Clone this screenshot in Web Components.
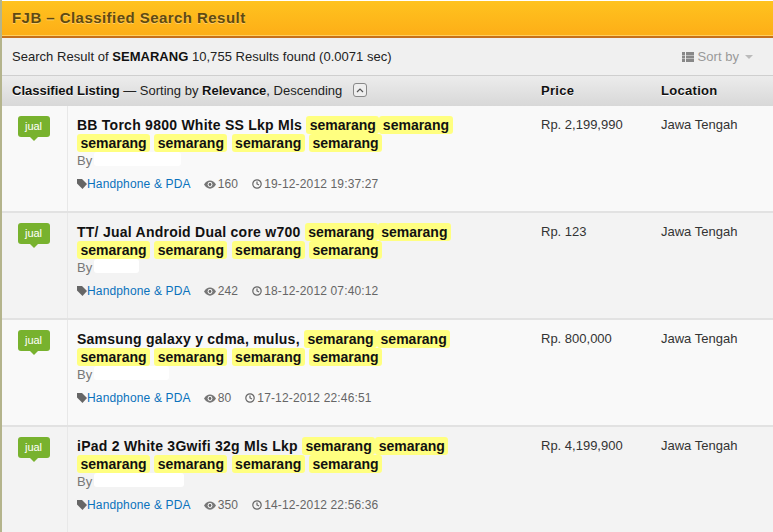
<!DOCTYPE html>
<html><head><meta charset="utf-8"><style>
html,body{margin:0;padding:0;background:#fff;overflow:hidden}
body{width:773px;height:532px;font:13px/18px "Liberation Sans",Arial,sans-serif;color:#333}
</style></head><body>
<fjb-panel>
<fjb-row title-text="BB Torch 9800 White SS Lkp Mls" price="Rp. 2,199,990" views="160" date="19-12-2012 19:37:27" mask="87" bg="#f9f9f9"></fjb-row>
<fjb-row title-text="TT/ Jual Android Dual core w700" price="Rp. 123" views="242" date="18-12-2012 07:40:12" mask="45" bg="#f3f3f3"></fjb-row>
<fjb-row title-text="Samsung galaxy y cdma, mulus," price="Rp. 800,000" views="80" date="17-12-2012 22:46:51" mask="75" bg="#f9f9f9"></fjb-row>
<fjb-row title-text="iPad 2 White 3Gwifi 32g Mls Lkp" price="Rp. 4,199,900" views="350" date="14-12-2012 22:56:36" mask="90" bg="#f3f3f3"></fjb-row>
</fjb-panel>
<script>
class FjbPanel extends HTMLElement{
constructor(){super();this.attachShadow({mode:'open'}).innerHTML=`<style>
:host{display:block;height:532px;overflow:hidden;border-left:2px solid #b4b48c;box-sizing:border-box;padding-top:1px}
.top{height:35px;box-sizing:border-box;background:linear-gradient(#ffc31f,#fdae17);border-bottom:1px solid #ffd060;padding:0 10px;display:flex;align-items:center;font-weight:bold;font-size:15px;color:#5f4a12;text-shadow:0 1px 0 rgba(255,255,255,.35);letter-spacing:.45px}
.bar{height:2px;background:#c8701a}
.search{height:38px;box-sizing:border-box;background:#f0f0f0;border-bottom:1px solid #cfcfcf;display:flex;align-items:center;justify-content:space-between;padding:0 20px 0 10px;font-size:13px;color:#222;letter-spacing:.03px}
.search b{color:#111}
.sort{color:#999;display:flex;align-items:center;gap:4px}
.sort i{width:0;height:0;border:4px solid transparent;border-top-color:#bbb;border-bottom:0;margin-left:2px}
.head{height:30px;box-sizing:border-box;background:linear-gradient(#ececec,#d8d8d8);display:grid;grid-template-columns:529px 120px 1fr;align-items:center;padding-left:10px;font-size:13px;line-height:18px;color:#222}
.head>span{height:18px}
.head b{color:#111;text-shadow:0 1px 0 #fff}
.up{display:inline-flex;width:12px;height:12px;border:1px solid #888;border-radius:3px;vertical-align:2px;margin-left:7px;align-items:center;justify-content:center;background:#eee}
.cap{font-weight:bold;letter-spacing:.3px}
</style>
<div class="top">FJB – Classified Search Result</div><div class="bar"></div>
<div class="search"><span>Search Result of <b>SEMARANG</b> 10,755 Results found (0.0071 sec)</span>
<span class="sort"><svg width="12" height="10" viewBox="0 0 12 10" fill="#888"><path d="M0 0h3v3H0zM4 0h8v3H4zM0 3.5h3v3H0zM4 3.5h8v3H4zM0 7h3v3H0zM4 7h8v3H4z"/></svg>Sort by<i></i></span></div>
<div class="head"><span><b>Classified Listing</b> — Sorting by <b>Relevance</b>, Descending <span class="up"><svg width="8" height="6" viewBox="0 0 8 6" fill="none" stroke="#555" stroke-width="1.2"><path d="M1 5l3-3 3 3"/></svg></span></span><b class="cap">Price</b><b class="cap">Location</b></div>
<slot></slot>`}}
customElements.define('fjb-panel',FjbPanel);
class FjbBadge extends HTMLElement{
constructor(){super();this.attachShadow({mode:'open'}).innerHTML=`<style>
:host{display:inline-block;position:relative;width:32px;height:21px;background:#78b22e;border-radius:3px;color:#fff;font-size:11px;line-height:21px;text-align:center}
:host::after{content:"";position:absolute;left:12px;bottom:-4px;border:4px solid transparent;border-top-color:#78b22e;border-bottom:0}
</style><slot></slot>`}}
customElements.define('fjb-badge',FjbBadge);
class FjbRow extends HTMLElement{
connectedCallback(){
const a=n=>this.getAttribute(n);
const h='<mark>semarang</mark>';
this.attachShadow({mode:'open'}).innerHTML=`<style>
:host{display:grid;grid-template-columns:66px 473px 120px 1fr;height:107px;box-sizing:border-box;border-bottom:2px solid #e2e2e2;background:${a('bg')};font-size:13px;color:#333}
.l{border-right:1px solid #e8e8e8;box-sizing:border-box;text-align:center;padding:10px 2px 0 0}
.m{padding:9px 0 0 9px}
.t{font-weight:bold;font-size:14px;line-height:18px;color:#111;letter-spacing:.25px;width:450px;padding-top:1px}
mark{background:#ffff80;color:#111;border-radius:3px;padding:1px 3.5px;letter-spacing:0}
.by{color:#777;line-height:18px;height:18px;display:flex;font-size:13px}
.by span{display:block;background:#fff;width:${a('mask')}px;height:14px;margin-left:2px;border-radius:3px}
.meta{margin-top:5px;display:flex;align-items:center;color:#666;font-size:12px;letter-spacing:.15px}
.meta a{color:#0a72bc;text-decoration:none;margin-right:13px}
.meta .v{margin-right:14px;display:flex;align-items:center;gap:2px}
.p{padding-top:10px;line-height:18px}
.c{padding-top:10px;line-height:18px}
</style>
<div class="l"><fjb-badge>jual</fjb-badge></div>
<div class="m"><div class="t">${a('title-text')} ${h}${h}<br>${h} ${h} ${h} ${h}</div>
<div class="by">By<span></span></div>
<div class="meta"><svg width="10" height="10" viewBox="0 0 10 10" fill="#666"><path d="M0 0h5l5 5-4.5 5L0 4.5z"/></svg><a>Handphone &amp; PDA</a>
<span class="v"><svg width="12" height="9" viewBox="0 0 12 9"><path d="M0 4.5c3-5.5 9-5.5 12 0-3 5.5-9 5.5-12 0z" fill="#777"/><circle cx="6" cy="4.5" r="2.4" fill="#fff"/><circle cx="6" cy="4.5" r="1.4" fill="#666"/></svg>${a('views')}</span>
<span class="v"><svg width="10" height="10" viewBox="0 0 10 10" fill="none" stroke="#666" stroke-width="1.2"><circle cx="5" cy="5" r="4.2"/><path d="M5 2.5V5l2 1"/></svg>${a('date')}</span></div></div>
<div class="p">${a('price')}</div><div class="c">Jawa Tengah</div>`}}
customElements.define('fjb-row',FjbRow);
</script></body></html>
